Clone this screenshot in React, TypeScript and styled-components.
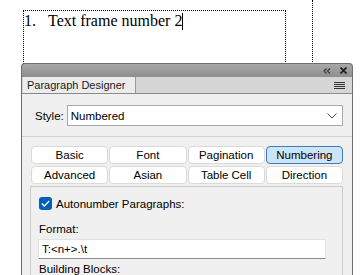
import React from "react";
import styled, { createGlobalStyle } from "styled-components";

const Global = createGlobalStyle`
  html, body { margin: 0; padding: 0; background: #ffffff; }
  body { width: 363px; height: 275px; overflow: hidden; }
`;

const Page = styled.div`
  position: relative;
  width: 363px;
  height: 275px;
  overflow: hidden;
  background: #ffffff;
`;

const Canvas = styled.div`
  position: relative;
  width: 363px;
  height: 275px;
`;

const Frame = styled.div<{ $left: number; $top: number; $width: number }>`
  position: absolute;
  left: ${(p) => p.$left}px;
  top: ${(p) => p.$top}px;
  width: ${(p) => p.$width}px;
  height: 300px;
  border: 1px dotted #000;
  box-sizing: border-box;
`;

const Guide = styled.div<{ $left: number }>`
  position: absolute;
  left: ${(p) => p.$left}px;
  top: 0;
  height: 300px;
  border-left: 1px dotted #000;
`;

const FrameText = styled.div`
  font-family: "Liberation Serif", "Times New Roman", serif;
  font-size: 16px;
  line-height: 18px;
  color: #000;
  padding: 1px 0 0 0;
  display: flex;
  align-items: center;
  white-space: pre;
`;

const Num = styled.span`
  width: 24px;
`;

const Caret = styled.span`
  display: inline-block;
  width: 1px;
  height: 17px;
  background: #000;
`;

const Panel = styled.div`
  position: absolute;
  left: 21px;
  top: 63px;
  width: 332px;
  height: 260px;
  display: flex;
  flex-direction: column;
  font-family: "Liberation Sans", Arial, sans-serif;
  font-size: 11px;
  color: #000;
`;

const TitleBar = styled.div`
  height: 13px;
  border: 1px solid #6e6e6e;
  border-bottom: none;
  border-radius: 4px 4px 0 0;
  background: linear-gradient(#a8a8a8, #8e8e8e);
  display: flex;
  justify-content: flex-end;
  align-items: center;
  gap: 9px;
  padding-right: 5px;
`;

const TabBar = styled.div`
  height: 16px;
  background: #d6d6d6;
  border-left: 1px solid #6e6e6e;
  border-right: 1px solid #6e6e6e;
  border-bottom: 1px solid #8a8a8a;
  display: flex;
  align-items: stretch;
  justify-content: space-between;
`;

const PanelTab = styled.div`
  background: #ececec;
  border-right: 1px solid #9a9a9a;
  padding: 0 10px 0 4px;
  display: flex;
  align-items: center;
  font-size: 11px;
  color: #1a1a1a;
  margin-left: 1px;
`;

const MenuButton = styled.div`
  display: flex;
  align-items: center;
  padding-right: 7px;
`;

const Body = styled.div`
  flex: 1;
  background: #f0f0f0;
  border-left: 1px solid #6e6e6e;
  border-right: 1px solid #6e6e6e;
  display: flex;
  flex-direction: column;
`;

const StyleRow = styled.div`
  display: flex;
  align-items: center;
  padding: 11px 9px 0 13px;
  gap: 3px;
  height: 21px;
`;

const Label = styled.span`
  font-size: 11.5px;
  color: #000;
`;

const Select = styled.div`
  flex: 1;
  height: 21px;
  box-sizing: border-box;
  background: #fff;
  border: 1px solid #a8a8a8;
  display: flex;
  align-items: center;
  justify-content: space-between;
  padding: 0 5px 0 3px;
  font-size: 11.5px;
`;

const Group = styled.div`
  margin-top: 10px;
  border-top: 1px solid #d2d2d2;
  padding: 9px 9px 0 8px;
  display: flex;
  flex-direction: column;
`;

const ButtonGrid = styled.div`
  display: grid;
  grid-template-columns: repeat(4, 1fr);
  column-gap: 1px;
  row-gap: 2px;
  padding-left: 1px;
`;

const SectionButton = styled.div<{ $active?: boolean }>`
  height: 18px;
  box-sizing: border-box;
  border: 1px solid ${(p) => (p.$active ? "#3d7db3" : "#dadada")};
  background: ${(p) => (p.$active ? "#cce4f7" : "#ffffff")};
  border-radius: 4px;
  display: flex;
  align-items: center;
  justify-content: center;
  font-size: 11.5px;
  color: #000;
`;

const Content = styled.div`
  margin-top: 2px;
  border: 1px solid #cccccc;
  border-bottom: none;
  height: 120px;
  padding: 10px 8px 0 8px;
  display: flex;
  flex-direction: column;
`;

const CheckRow = styled.div`
  display: flex;
  align-items: center;
  gap: 4px;
  height: 13px;
`;

const Check = styled.div`
  width: 13px;
  height: 13px;
  border-radius: 3px;
  background: #005fb8;
  display: flex;
  align-items: center;
  justify-content: center;
`;

const FieldLabel = styled.div<{ $mt: number }>`
  margin-top: ${(p) => p.$mt}px;
  font-size: 11.5px;
  height: 14px;
  line-height: 14px;
`;

const TextField = styled.div`
  margin-top: 3px;
  margin-right: 8px;
  margin-left: -1px;
  height: 20px;
  box-sizing: border-box;
  background: #fff;
  border: 1px solid #e3e3e3;
  border-bottom: 1px solid #8a8a8a;
  display: flex;
  align-items: center;
  padding-left: 3px;
  font-size: 11.5px;
`;

const sections = [
  "Basic",
  "Font",
  "Pagination",
  "Numbering",
  "Advanced",
  "Asian",
  "Table Cell",
  "Direction",
];

export default function App() {
  return (
    <Page>
      <Global />
      <Canvas>
        <Frame $left={23} $top={10} $width={263}>
          <FrameText>
            <Num>1.</Num>Text frame number 2<Caret />
          </FrameText>
        </Frame>
        <Guide $left={312} />
      </Canvas>
      <Panel>
        <TitleBar>
          <svg width="8" height="6" viewBox="0 0 8 6">
            <path d="M3.5 0.5 L1 3 L3.5 5.5 M7 0.5 L4.5 3 L7 5.5" stroke="#3a3a3a" strokeWidth="1.2" fill="none" />
          </svg>
          <svg width="7" height="7" viewBox="0 0 7 7">
            <path d="M0.5 0.5 L6.5 6.5 M6.5 0.5 L0.5 6.5" stroke="#222" strokeWidth="1.8" />
          </svg>
        </TitleBar>
        <TabBar>
          <PanelTab>Paragraph Designer</PanelTab>
          <MenuButton>
            <svg width="11" height="7" viewBox="0 0 11 7">
              <path d="M0 0.5 H11 M0 2.5 H11 M0 4.5 H11 M0 6.5 H11" stroke="#333" strokeWidth="1" />
            </svg>
          </MenuButton>
        </TabBar>
        <Body>
          <StyleRow>
            <Label>Style:</Label>
            <Select>
              <span>Numbered</span>
              <svg width="10" height="6" viewBox="0 0 10 6">
                <path d="M0.5 0.5 L5 5 L9.5 0.5" stroke="#444" strokeWidth="1" fill="none" />
              </svg>
            </Select>
          </StyleRow>
          <Group>
            <ButtonGrid>
              {sections.map((s) => (
                <SectionButton key={s} $active={s === "Numbering"}>
                  {s}
                </SectionButton>
              ))}
            </ButtonGrid>
            <Content>
              <CheckRow>
                <Check>
                  <svg width="9" height="7" viewBox="0 0 9 7">
                    <path d="M0.8 3.5 L3.3 6 L8.2 1" stroke="#fff" strokeWidth="1.3" fill="none" />
                  </svg>
                </Check>
                <Label>Autonumber Paragraphs:</Label>
              </CheckRow>
              <FieldLabel $mt={12}>Format:</FieldLabel>
              <TextField>{"T:<n+>.\\t"}</TextField>
              <FieldLabel $mt={3}>Building Blocks:</FieldLabel>
            </Content>
          </Group>
        </Body>
      </Panel>
    </Page>
  );
}
